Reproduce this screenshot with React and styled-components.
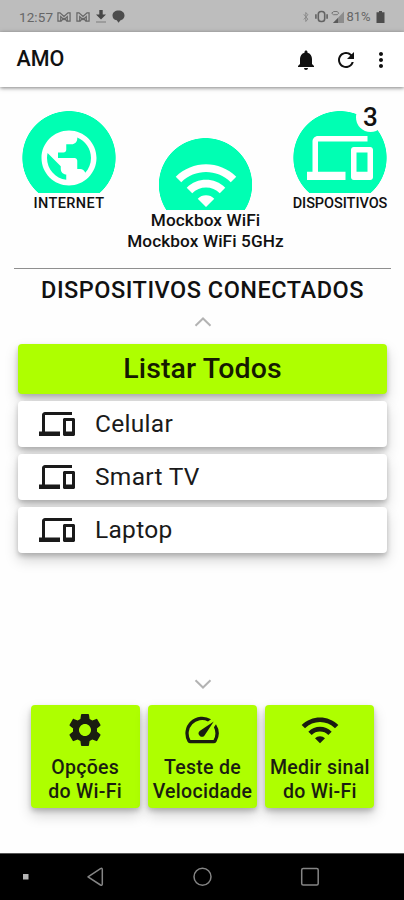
import React from 'react'
import styled, { createGlobalStyle } from 'styled-components'
import {
    MdPublic, MdWifi, MdDevices, MdNotifications, MdRefresh, MdMoreVert,
    MdSettings, MdSpeed
} from 'react-icons/md'

const devices = ['Celular', 'Smart TV', 'Laptop'];

const actions = [
    { icon: MdSettings, lines: ['Opções', 'do Wi-Fi'] },
    { icon: MdSpeed, lines: ['Teste de', 'Velocidade'] },
    { icon: MdWifi, lines: ['Medir sinal', 'do Wi-Fi'] },
];

const MailIcon = () => (
    <svg width="14" height="12" viewBox="0 0 15 12" fill="none" stroke="#666" strokeWidth="1.3">
        <path d="M1 1.5h2.2l4.3 4 4.3-4H14v9h-3V5.6L7.5 8.8 4 5.6v4.9H1z" />
        <path d="M4 10.5l3.5-3.2 3.5 3.2" />
    </svg>
);

const StatusBar = () => (
    <Status>
        <Clock>12:57</Clock>
        <MailIcon />
        <SecondMail><MailIcon /></SecondMail>
        <Download width="12" height="14" viewBox="0 0 12 14">
            <path d="M4.300 0h3.400v4.500H11L6 9.600 1 4.500h3.300z" fill="#474747" />
            <path d="M1 12h10" stroke="#8a8a8a" strokeWidth="1.3" />
        </Download>
        <svg width="13" height="13" viewBox="0 0 13 13" fill="#4c4c4c">
            <path d="M6.500 .5C10 .5 12.500 2.600 12.500 5.400S10 10 8.500 10.200L6.500 12.800 4.800 10.200C2 9.800.5 7.800.5 5.400.5 2.600 3 .5 6.500.5z" />
        </svg>
        <StatusRight>
            <svg width="6" height="12" viewBox="0 0 6 12" fill="none" stroke="#8b8b8b" strokeWidth="1">
                <path d="M.8 3.300l4 4.800L2.800 10.500v-9l2 2.200-4 4.800" />
            </svg>
            <Vibrate width="13" height="13" viewBox="0 0 13 13" fill="none" stroke="#636363" strokeWidth="1.600">
                <rect x="3.300" y="1.500" width="6.400" height="10" rx="2.800" />
                <path d="M.9 4.200v4.600M12.100 4.200v4.600" />
            </Vibrate>
            <svg width="14" height="14" viewBox="0 0 14 14">
                <path d="M13 1.500V13H2z" fill="#8c8c8c" />
                <path d="M7 8v5H2z" fill="#5a5a5a" />
                <path d="M.7 3.200l2-1.700h3.600l1.400 1.700-1.400 1.500H2.500z" fill="none" stroke="#777" strokeWidth="1" />
            </svg>
            <Percent>81%</Percent>
            <svg width="9" height="12" viewBox="0 0 9 12" fill="#4d4d4d">
                <path d="M3 0h3v1.200h2.500V12H.5V1.200H3z" />
            </svg>
        </StatusRight>
    </Status>
);

const App = () => {
    return (
        <>
            <GlobalStyle />
            <Screen>
                <StatusBar />
                <Toolbar>
                    <Title>AMO</Title>
                    <MdNotifications size={24} />
                    <MdRefresh size={24} />
                    <MdMoreVert size={24} />
                </Toolbar>
                <Network>
                    <Node>
                        <Disc $height={82}><MdPublic size={66} /></Disc>
                        <NodeLabel $spacing="0.4px">INTERNET</NodeLabel>
                    </Node>
                    <Node $wide>
                        <Disc $height={72}><MdWifi size={66} /></Disc>
                        <WifiName>Mockbox WiFi</WifiName>
                        <WifiName>Mockbox WiFi 5GHz</WifiName>
                    </Node>
                    <Node>
                        <Disc $height={82}><MdDevices size={66} /></Disc>
                        <Count>3</Count>
                        <NodeLabel $spacing="-0.05px">DISPOSITIVOS</NodeLabel>
                    </Node>
                </Network>
                <Heading>DISPOSITIVOS CONECTADOS</Heading>
                <Chevron viewBox="0 0 18 10"><path d="M1.500 8.800L9 1.500l7.500 7.300" /></Chevron>
                <List>
                    <ListAll>Listar Todos</ListAll>
                    {devices.map(name => (
                        <Device key={name}>
                            <MdDevices size={36} />
                            <span>{name}</span>
                        </Device>
                    ))}
                </List>
                <Chevron viewBox="0 0 18 10"><path d="M1.500 1.200L9 8.500l7.500-7.300" /></Chevron>
                <Actions>
                    {actions.map(({ icon: Icon, lines }) => (
                        <Action key={lines[0]}>
                            <Icon size={40} />
                            {lines.map(line => <span key={line}>{line}</span>)}
                        </Action>
                    ))}
                </Actions>
                <NavBar>
                    <svg width="404" height="46" viewBox="0 0 404 46" fill="none" stroke="#858585" strokeWidth="1.500">
                        <rect x="23" y="20" width="5.500" height="5.500" fill="#b5b5b5" stroke="none" />
                        <path d="M88 22.800l12.500-8.200q1.800-.8 1.800 1v14.400q0 1.800-1.800 1z" strokeLinejoin="round" />
                        <circle cx="202.500" cy="22.800" r="8.500" />
                        <rect x="301.700" y="14.600" width="16.500" height="16.500" rx="1.500" />
                    </svg>
                </NavBar>
            </Screen>
        </>
    )
}

export default App


const GlobalStyle = createGlobalStyle`
    *{
        box-sizing:border-box;
    }
    body{
        margin:0;
        background:#fefefe;
        font-family:Roboto, sans-serif;
        color:#111;
    }
    svg{
        display:block;
        flex:none;
    }
`;

const Screen = styled.div`
    width:404px;
    height:900px;
    display:flex;
    flex-direction:column;
    overflow:hidden;
`;

const Status = styled.div`
    height:32px;
    flex:none;
    display:flex;
    align-items:center;
    padding:1px 19.500px 0 19px;
    background:#bdbdbd;
    color:#666;
`;

const Clock = styled.span`
    width:38px;
    font-size:13.500px;
    letter-spacing:0.1px;
`;

const SecondMail = styled.span`
    margin:0 5px;
`;

const Download = styled.svg`
    margin-right:5px;
`;

const StatusRight = styled.div`
    margin-left:auto;
    display:flex;
    align-items:center;
`;

const Vibrate = styled.svg`
    margin:0 3px 0 6px;
`;

const Percent = styled.span`
    width:31px;
    padding-left:2px;
    font-size:13px;
`;

const Toolbar = styled.header`
    position:relative;
    height:55px;
    flex:none;
    display:flex;
    align-items:center;
    gap:11.500px;
    padding:0 11px 0 16.500px;
    background:#fff;
    box-shadow:0 1px 4px rgba(0,0,0,0.5);
    svg:first-of-type{
        margin-right:4px;
    }
`;

const Title = styled.h1`
    margin:0 auto 2px 0;
    font-size:21.500px;
    font-weight:500;
`;

const Network = styled.section`
    height:182px;
    flex:none;
    display:flex;
    justify-content:space-between;
    margin:0 13px 0 14px;
    padding-top:23.500px;
    border-bottom:1px solid #8f8f8f;
`;

const Node = styled.div`
    position:relative;
    width:${props => props.$wide ? '160px' : '110px'};
    margin:${props => props.$wide ? '27.500px -15px 0 -9px' : '0'};
    display:flex;
    flex-direction:column;
    align-items:center;
    &:last-child{
        left:4px;
    }
`;

const Disc = styled.div`
    width:93.500px;
    height:${props => props.$height}px;
    padding-top:14px;
    display:flex;
    justify-content:center;
    align-items:flex-start;
    overflow:hidden;
    color:#fff;
    background:radial-gradient(circle at 50% 46.75px, #00ffb3 46.300px, transparent 47px);
`;

const NodeLabel = styled.span`
    margin-top:2px;
    font-size:14.500px;
    line-height:17px;
    font-weight:500;
    white-space:nowrap;
    letter-spacing:${props => props.$spacing};
`;

const WifiName = styled.span`
    font-size:17.200px;
    line-height:20.500px;
    font-weight:500;
    letter-spacing:0.1px;
    white-space:nowrap;
`;

const Count = styled.span`
    position:absolute;
    top:-8px;
    left:71px;
    width:29px;
    height:29px;
    border-radius:50%;
    background:#fefefe;
    font-size:26px;
    line-height:29px;
    font-weight:500;
    text-align:center;
`;

const Heading = styled.h2`
    margin:7px 0 0;
    padding-left:1px;
    font-size:23.500px;
    line-height:28px;
    font-weight:500;
    letter-spacing:0.5px;
    text-align:center;
`;

const Chevron = styled.svg`
    width:18px;
    height:10px;
    margin:13px auto 0 194px;
    fill:none;
    stroke:#b3b3b3;
    stroke-width:2;
`;

const List = styled.div`
    height:339px;
    flex:none;
    display:flex;
    flex-direction:column;
    gap:7px;
    padding:17px 17px 0 18px;
`;

const card = `
    border-radius:4px;
    box-shadow:0 3px 5px rgba(0,0,0,0.2), 0 7px 14px rgba(0,0,0,0.18);
`;

const ListAll = styled.button`
    ${card}
    height:50px;
    border:none;
    padding:0 0 2px;
    background:#aeff00;
    color:#151a00;
    font:500 28.500px Roboto, sans-serif;
    letter-spacing:0.1px;
`;

const Device = styled.div`
    ${card}
    height:46px;
    display:flex;
    align-items:center;
    gap:20px;
    padding-left:21px;
    background:#fff;
    color:#1a1a1a;
    font-size:24.500px;
    letter-spacing:0.3px;
    span{
        padding-bottom:2px;
    }
`;

const Actions = styled.div`
    display:flex;
    gap:8px;
    padding:16px 29.500px 0 30.500px;
`;

const Action = styled.button`
    ${card}
    flex:1;
    height:103px;
    display:flex;
    flex-direction:column;
    align-items:center;
    padding:5px 0 0;
    border:none;
    background:#aeff00;
    color:#1a1d10;
    font:500 19.500px/24px Roboto, sans-serif;
    letter-spacing:0.3px;
    white-space:nowrap;
    svg{
        margin-bottom:6px;
    }
`;

const NavBar = styled.nav`
    height:47px;
    flex:none;
    margin-top:auto;
    border-top:1px solid #555;
    background:#000;
`;
